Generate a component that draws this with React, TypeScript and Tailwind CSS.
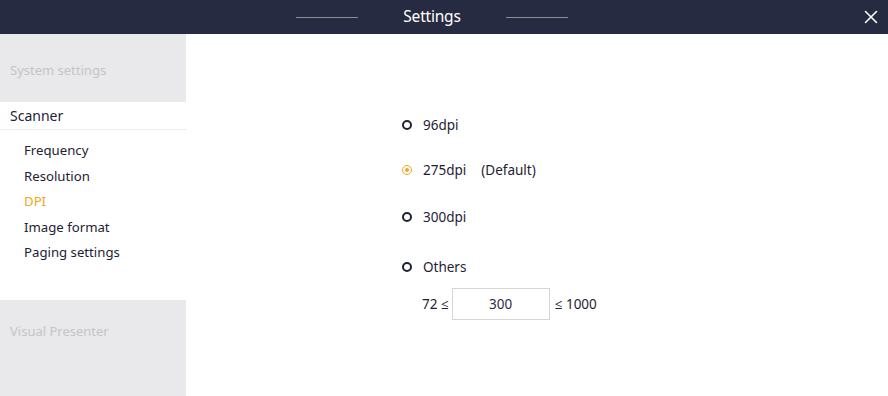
import { X } from "lucide-react";

// Settings window: dark title bar, grey/white category rail on the left,
// DPI options on the right.

const scannerItems = ["Frequency", "Resolution", "DPI", "Image format", "Paging settings"];

function Radio({ checked }: { checked?: boolean }) {
  if (checked) {
    return (
      <span className="flex h-[10px] w-[10px] items-center justify-center rounded-full border-[1.5px] border-[#f5a623]">
        <span className="h-[4px] w-[4px] rounded-full bg-[#f5a623]" />
      </span>
    );
  }
  return <span className="h-[10px] w-[10px] rounded-full border-2 border-[#1f2233]" />;
}

function Option({ label, note, checked }: { label: string; note?: string; checked?: boolean }) {
  return (
    <div className="flex h-[20px] items-center">
      <Radio checked={checked} />
      <span className="ml-[11px]">{label}</span>
      {note && <span className="ml-[15px]">{note}</span>}
    </div>
  );
}

export default function App() {
  return (
    <div
      className="flex h-[396px] w-[888px] flex-col overflow-hidden bg-white text-[#2b2e3c]"
      style={{ fontFamily: '"Noto Sans", "Open Sans", sans-serif' }}
    >
      <header className="relative flex h-[34px] shrink-0 items-center justify-center bg-[#272b41] pr-[24px]">
        <div className="flex items-center gap-[45px]">
          <span className="h-px w-[62px] bg-[#8a8c96]" />
          <span className="text-[15.5px] tracking-[-0.2px] text-white">Settings</span>
          <span className="h-px w-[62px] bg-[#8a8c96]" />
        </div>
        <button type="button" className="absolute right-[6px] top-[6px] text-white">
          <X size={22} strokeWidth={1.7} />
        </button>
      </header>

      <div className="flex min-h-0 flex-1">
        <aside className="flex w-[186px] shrink-0 flex-col">
          <div className="flex h-[68px] items-center bg-[#e9e9eb] px-[10px] pt-[6px] text-[13px] text-[#c3c4c8]">
            System settings
          </div>
          <div className="flex h-[28px] items-center border-b border-[#ebebed] px-[10px] text-[14px] text-[#1f2233]">
            Scanner
          </div>
          <ul className="flex h-[170px] flex-col gap-[5.5px] pl-[24px] pt-[10px] text-[13.2px]">
            {scannerItems.map((item) => (
              <li
                key={item}
                className={`leading-[20px] ${item === "DPI" ? "text-[#f5a623]" : "text-[#1f2233]"}`}
              >
                {item}
              </li>
            ))}
          </ul>
          <div className="flex-1 bg-[#e9e9eb] px-[10px] pt-[22px] text-[13px] text-[#c3c4c8]">
            Visual Presenter
          </div>
        </aside>

        <main className="flex flex-1 flex-col pl-[216px] pt-[81px] text-[13.5px] text-[#1f2233]">
          <Option label="96dpi" />
          <div className="mt-[25px]">
            <Option label="275dpi" note="(Default)" checked />
          </div>
          <div className="mt-[27px]">
            <Option label="300dpi" />
          </div>
          <div className="mt-[30px]">
            <Option label="Others" />
          </div>
          <div className="mt-[11px] flex items-center pl-[20px]">
            <span>72 ≤</span>
            <div className="ml-[3px] flex h-[32px] w-[98px] items-center justify-center border border-[#d6d6da] text-[#2b2e3c]">
              300
            </div>
            <span className="ml-[5px]">≤ 1000</span>
          </div>
        </main>
      </div>
    </div>
  );
}
